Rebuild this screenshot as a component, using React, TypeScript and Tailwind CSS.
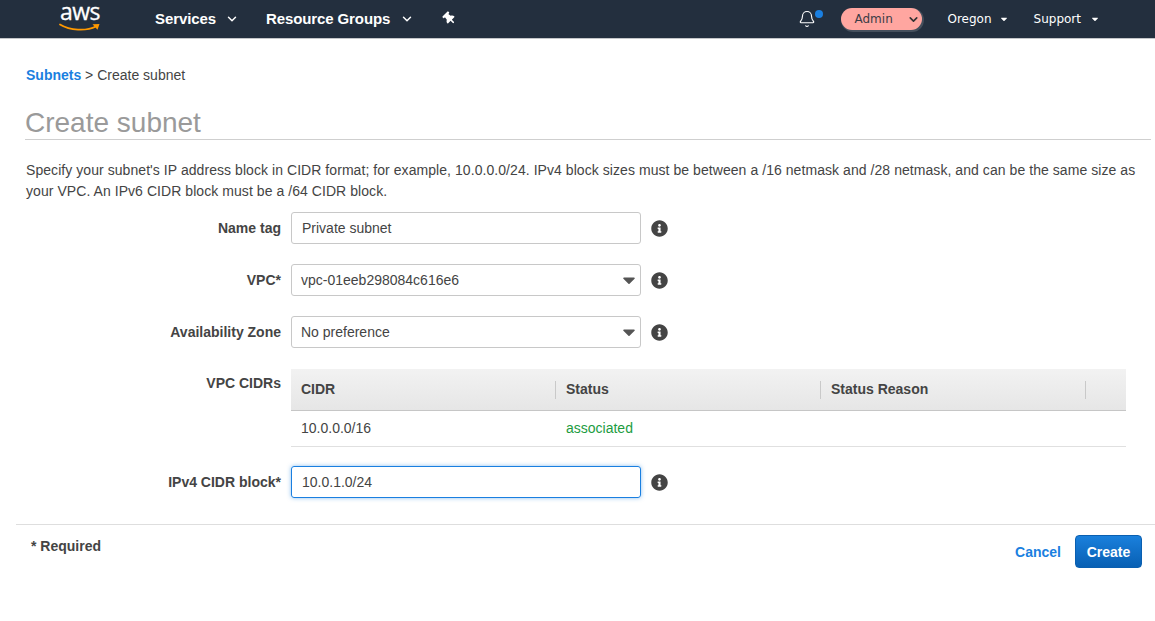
import React from "react";
import { Bell, ChevronDown } from "lucide-react";
import { FaInfoCircle, FaThumbtack, FaCaretDown } from "react-icons/fa";

function Info() {
  return <FaInfoCircle className="ml-[10px] h-[17px] w-[17px] shrink-0 text-[#444]" />;
}

function Row({ label, children, className = "" }: { label: string; children: React.ReactNode; className?: string }) {
  return (
    <div className={`flex items-center ${className}`}>
      <div className="w-[281px] shrink-0 text-right font-bold text-[#444]">{label}</div>
      <div className="ml-[10px] flex items-center">
        {children}
        <Info />
      </div>
    </div>
  );
}

function Field({ value, select }: { value: string; select?: boolean }) {
  return (
    <div className={`flex h-[32px] w-[350px] items-center justify-between rounded-[3px] border border-[#c8c8c8] pr-[1px] text-[#444] ${select ? "pl-[9px]" : "pl-[10px]"}`}>
      <span>{value}</span>
      {select && <FaCaretDown className="h-[20px] w-[20px] text-[#555]" />}
    </div>
  );
}

function Th({ children, w }: { children?: React.ReactNode; w: string }) {
  return (
    <div className={`${w} flex h-[18px] items-center border-r border-[#c9c9c9] pl-[10px] font-bold text-[#444]`}>{children}</div>
  );
}

export default function App() {
  return (
    <div className="min-h-[621px] bg-white text-[14px] leading-[21px] text-[#444]" style={{ fontFamily: '"Liberation Sans", Arial, sans-serif' }}>
      <header className="flex h-[39px] items-center border-b border-[#c4c6c9] bg-[#232f3e] text-white">
        <svg width="44" height="32" viewBox="0 0 44 32" className="ml-[58px] mt-[-1px]">
          <text x="22" y="17" textAnchor="middle" fontSize="23" letterSpacing="-0.5" fill="#ffffff" stroke="#ffffff" strokeWidth="0.3" fontFamily="'Open Sans', sans-serif">aws</text>
          <path d="M2 21.5C12 27.5 28 28.5 38 23.5" fill="none" stroke="#ff9900" strokeWidth="1.8" strokeLinecap="round" />
          <path d="M34.5 21.3L41.5 21L39.5 26.8Z" fill="#ff9900" />
        </svg>
        <span className="ml-[53px] mt-[-2px] text-[15px] font-bold tracking-[-0.1px]">Services</span>
        <ChevronDown className="ml-[9px] h-[14px] w-[14px]" strokeWidth={2.5} />
        <span className="ml-[27px] mt-[-2px] text-[15px] font-bold tracking-[-0.1px]">Resource Groups</span>
        <ChevronDown className="ml-[10px] h-[14px] w-[14px]" strokeWidth={2.5} />
        <FaThumbtack className="ml-[29px] mt-[-2px] h-[13px] w-[13px] -rotate-45" />
        <div className="ml-auto flex items-center text-[12px]" style={{ fontFamily: '"DejaVu Sans", Verdana, sans-serif' }}>
          <div className="relative">
            <Bell className="h-[18px] w-[18px]" strokeWidth={1.5} />
            <span className="absolute right-[-7px] top-[0px] h-[8px] w-[8px] rounded-full bg-[#1a7fe0]" />
          </div>
          <div className="ml-[25px] flex h-[22px] w-[81px] items-center rounded-full bg-[#ffa6a0] pl-[14px] text-[#3c3c46] shadow-[1px_1px_0_1px_#454f5c]">
            <span>Admin</span>
            <ChevronDown className="ml-[14px] h-[13px] w-[13px] text-[#333]" strokeWidth={3} />
          </div>
          <span className="ml-[26px]">Oregon</span>
          <FaCaretDown className="ml-[7px] h-[10px] w-[10px]" />
          <span className="ml-[25px]">Support</span>
          <FaCaretDown className="ml-[9px] h-[10px] w-[10px]" />
          <div className="w-[55px]" />
        </div>
      </header>

      <div className="pl-[25px] pr-[4px]">
        <div className="mt-[26px] pl-[1px]">
          <span className="font-bold text-[#1a7fe0]">Subnets</span> &gt; Create subnet
        </div>
        <h1 className="mt-[21px] h-[33px] border-b border-[#cfcfcf] text-[28px] font-normal leading-[32px] text-[#9a9a9a]">Create subnet</h1>
        <p className="mt-[20px] pl-[1px] pr-[10px] tracking-[0.06px]">
          Specify your subnet's IP address block in CIDR format; for example, 10.0.0.0/24. IPv4 block sizes must be between a /16 netmask and /28 netmask, and can be the same size as your VPC. An IPv6 CIDR block must be a /64 CIDR block.
        </p>
      </div>

      <div className="mt-[10px] flex flex-col">
        <Row label="Name tag"><Field value="Private subnet" /></Row>
        <Row label="VPC*" className="mt-[20px]"><Field value="vpc-01eeb298084c616e6" select /></Row>
        <Row label="Availability Zone" className="mt-[20px]"><Field value="No preference" select /></Row>
        <div className="mt-[21px] flex items-start">
          <div className="w-[281px] shrink-0 pt-[4px] text-right font-bold text-[#444]">VPC CIDRs</div>
          <div className="ml-[10px] w-[835px]">
            <div className="flex h-[42px] items-center border-b border-[#c6c6c6] bg-gradient-to-b from-[#f2f2f2] to-[#e6e6e6]">
              <Th w="w-[265px]">CIDR</Th>
              <Th w="w-[265px]">Status</Th>
              <Th w="w-[265px]">Status Reason</Th>
            </div>
            <div className="flex h-[36px] items-center border-b border-[#e0e0e0]">
              <div className="w-[265px] pl-[10px]">10.0.0.0/16</div>
              <div className="pl-[10px] text-[#1d9c3f]">associated</div>
            </div>
          </div>
        </div>
        <div className="mt-[19px] flex items-center">
          <div className="w-[281px] shrink-0 text-right font-bold text-[#444]">IPv4 CIDR block*</div>
          <div className="ml-[10px] flex items-center">
            <div className="flex h-[32px] w-[350px] items-center rounded-[3px] border border-[#1a7fe0] pl-[10px] shadow-[0_0_4px_rgba(26,127,224,0.5)]">10.0.1.0/24</div>
            <Info />
          </div>
        </div>
      </div>

      <div className="ml-[16px] mt-[26px] flex items-start border-t border-[#dedede] pr-[13px]">
        <span className="ml-[15px] mt-[11px] font-bold">* Required</span>
        <a className="ml-auto mt-[17px] font-bold text-[#1a7fe0]">Cancel</a>
        <button className="ml-[14px] mt-[10px] h-[33px] w-[67px] rounded-[4px] border border-[#0a5fb0] bg-gradient-to-b from-[#1a80dc] to-[#0860b4] pt-[1px] font-bold text-white">Create</button>
      </div>
    </div>
  );
}
